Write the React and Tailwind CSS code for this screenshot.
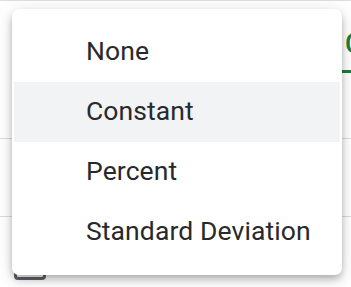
// Overflow menu for a series' error-bar type, open over the chart editor.
const OPTIONS = ['None', 'Constant', 'Percent', 'Standard Deviation'];

export default function App() {
  const active = 'Constant';

  return (
    <div className="relative h-[287px] w-[351px] overflow-hidden border-t border-[#dadce0] bg-white font-['Roboto',sans-serif]">
      {/* Page behind the menu */}
      <div className="flex h-[72px] w-[351px]">
        <div className="ml-[342px] flex h-full shrink-0 flex-col justify-end">
          <div className="whitespace-nowrap border-b-[3px] border-[#188038] pb-[10px] pl-[3px] pr-4 text-[27px] font-medium leading-[32px] text-[#188038]">
            C
          </div>
        </div>
      </div>
      <div className="h-[66px] border-b border-[#dadce0]" />
      <div className="h-[78px] border-b border-[#dadce0]" />
      <div className="pl-[14px] pt-[31px]">
        <div className="size-[32px] rounded-[4px] border-[3px] border-[#5f6368]" />
      </div>

      {/* Menu */}
      <ul className="absolute left-[12px] top-[8px] w-[330px] rounded-[7px] bg-white px-[2px] py-[13px] shadow-[0_3px_7px_-2px_rgba(0,0,0,0.2),0_6px_9px_0_rgba(0,0,0,0.14),0_2px_17px_0_rgba(0,0,0,0.12)]">
        {OPTIONS.map(o => (
          <li
            key={o}
            className={`flex h-[60px] items-center pb-[2px] pl-[72px] text-[26.5px] tracking-[0.1px] text-[#28292c] ${o === active ? 'bg-[#f1f3f4]' : ''}`}
          >
            {o}
          </li>
        ))}
      </ul>
    </div>
  );
}
